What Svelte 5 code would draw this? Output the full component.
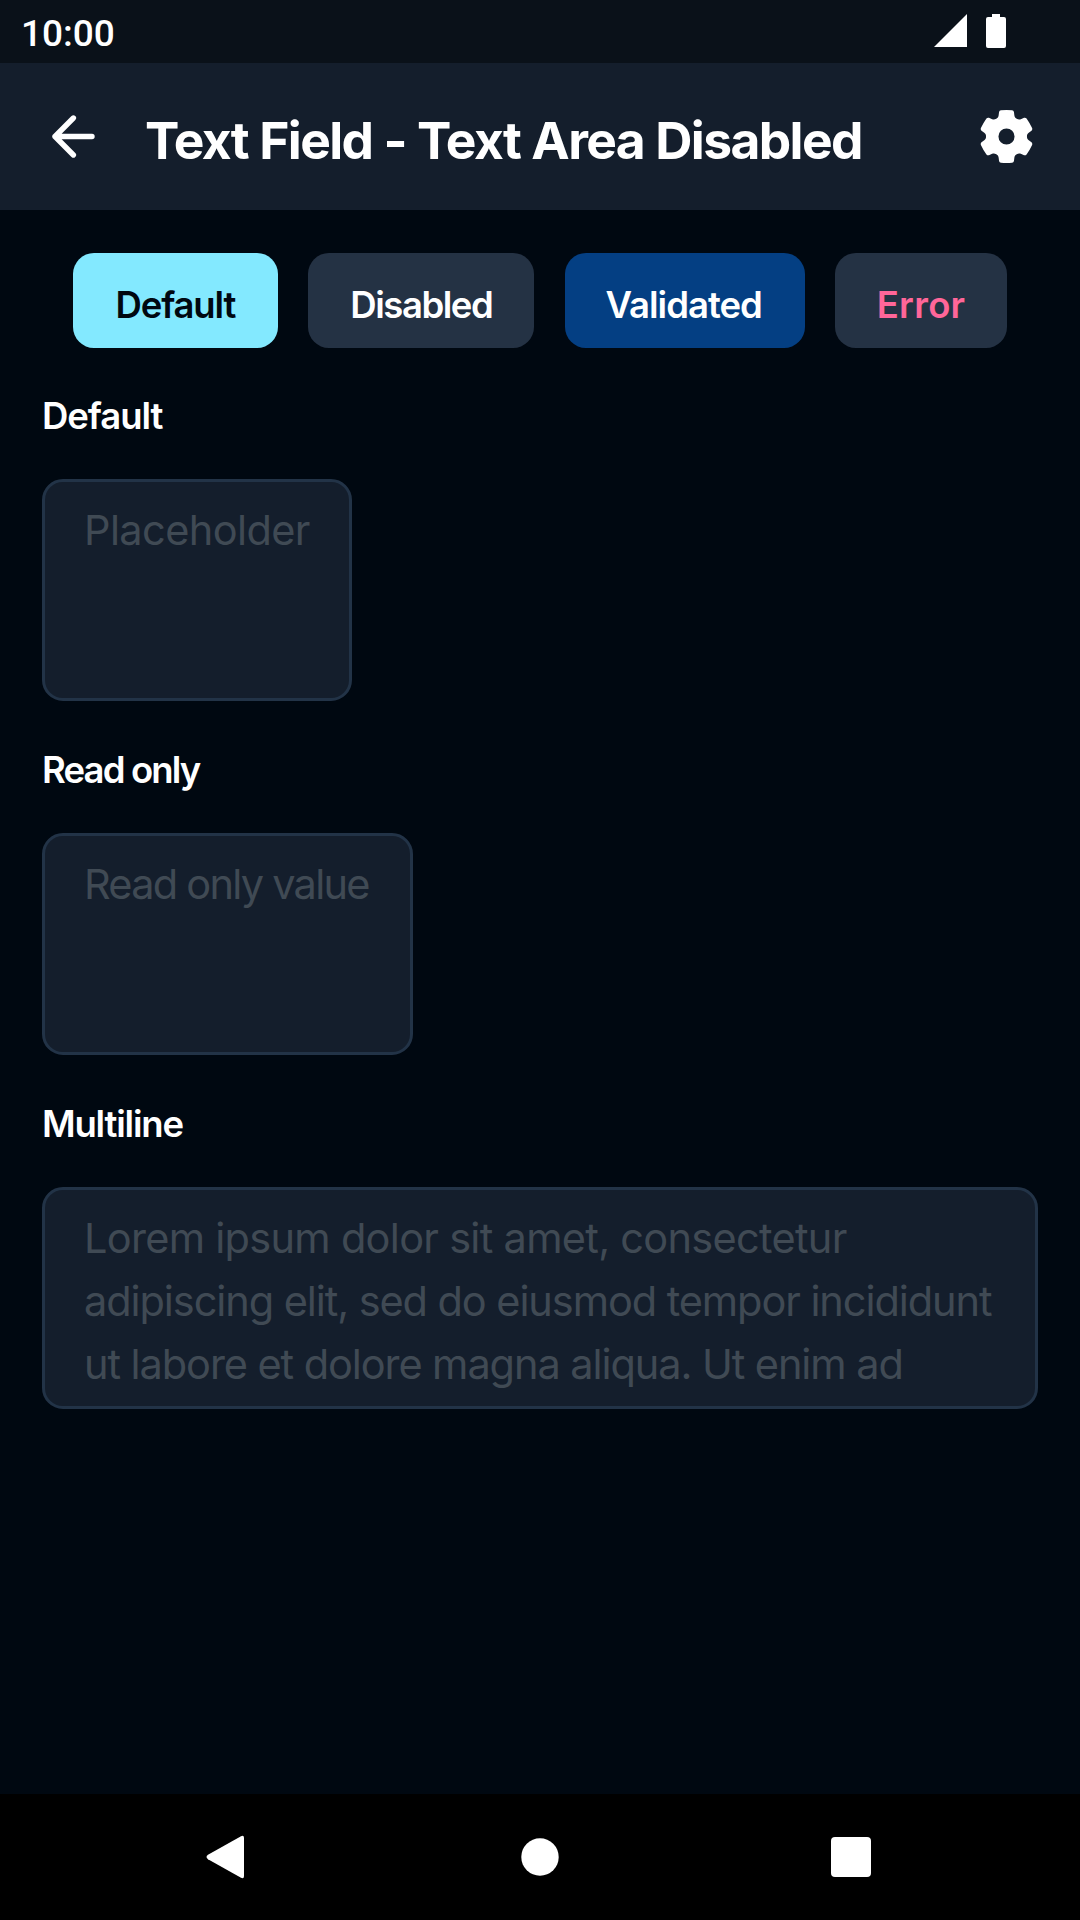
<script>
  const buttons = [
    { label: 'Default', kind: 'primary' },
    { label: 'Disabled', kind: 'secondary' },
    { label: 'Validated', kind: 'validated' },
    { label: 'Error', kind: 'error' },
  ];

  const fields = [
    { title: 'Default', kind: 'placeholder', lines: ['Placeholder'] },
    { title: 'Read only', kind: 'readonly', lines: ['Read only value'] },
    {
      title: 'Multiline',
      kind: 'multiline',
      lines: [
        'Lorem ipsum dolor sit amet, consectetur',
        'adipiscing elit, sed do eiusmod tempor incididunt',
        'ut labore et dolore magna aliqua. Ut enim ad',
      ],
    },
  ];

  // One gear tooth, centred on the origin and pointing up; repeated every 60 degrees.
  const tooth = [
    ['L', [-10.15, -17.6]],
    ['C', [-8.45, -18.6], [-8, -19.5], [-7.8, -21]],
    ['L', [-7.4, -24.4]],
    ['Q', [-7.1, -25.9], [-5.5, -26.2]],
    ['Q', [0, -26.7], [5.5, -26.2]],
    ['Q', [7.1, -25.9], [7.4, -24.4]],
    ['L', [7.8, -21]],
    ['C', [8, -19.5], [8.45, -18.6], [10.15, -17.6]],
  ];

  function turn([x, y], angle) {
    const c = Math.cos(angle);
    const s = Math.sin(angle);
    return `${(x * c - y * s).toFixed(2)} ${(x * s + y * c).toFixed(2)}`;
  }

  const outline = [0, 1, 2, 3, 4, 5]
    .flatMap((k) => tooth.map(([cmd, ...pts]) => cmd + pts.map((p) => turn(p, (k * Math.PI) / 3)).join(' ')))
    .join('');
  const gear = `M${outline.slice(1)}ZM8 0A8 8 0 1 0 -8 0A8 8 0 1 0 8 0Z`;
</script>

<div class="screen">
  <div class="status">
    <span class="time">10:00</span>
    <span class="indicators">
      <svg width="33" height="34" viewBox="0 0 33 34"><path d="M33 0V33H0Z" /></svg>
      <svg width="20" height="34" viewBox="0 0 20 34"><path d="M6 0H14V3H18Q20 3 20 5V32Q20 34 18 34H2Q0 34 0 32V5Q0 3 2 3H6Z" /></svg>
    </span>
  </div>

  <header>
    <svg class="back" width="63" height="63" viewBox="0 0 63 63"><path d="M50 31.5H13M31.4 13L13 31.5L31.4 50" /></svg>
    <h1>Text Field - Text Area Disabled</h1>
    <svg class="gear" width="63" height="63" viewBox="-31.3 -31.3 62.6 62.6"><path fill-rule="evenodd" d={gear} /></svg>
  </header>

  <main>
    <div class="buttons">
      {#each buttons as b}
        <button class={b.kind}><span>{b.label}</span></button>
      {/each}
    </div>

    {#each fields as f}
      <section class={f.kind}>
        <h2><span>{f.title}</span></h2>
        <div class="field">
          {#each f.lines as line}
            <p><span>{line}</span></p>
          {/each}
        </div>
      </section>
    {/each}
  </main>

  <nav>
    <svg width="54" height="54" viewBox="0 0 54 54"><path d="M41 6.2Q44 4.8 44 8V46Q44 49.2 41 47.8L8 29.2Q5 27 8 24.8Z" /></svg>
    <svg width="54" height="54" viewBox="0 0 54 54"><circle cx="28" cy="27" r="18.7" /></svg>
    <svg width="54" height="54" viewBox="0 0 54 54"><rect x="7" y="7" width="40" height="40" rx="4" /></svg>
  </nav>
</div>

<style>
  :global(body) {
    margin: 0;
    background: #000811;
  }
  .screen {
    width: 1080px;
    height: 1920px;
    display: flex;
    flex-direction: column;
    overflow: hidden;
    background: #000811;
    color: #fff;
    font-family: Inter, 'Liberation Sans', sans-serif;
    box-sizing: border-box;
  }
  svg {
    display: block;
    fill: #fff;
    flex: none;
  }
  .status {
    height: 63px;
    flex: none;
    display: flex;
    justify-content: space-between;
    background: #0a1119;
    padding: 0 74px 0 21px;
  }
  .time {
    font: 500 37px/67px Roboto, sans-serif;
  }
  .indicators {
    display: flex;
    gap: 19px;
    padding-top: 14px;
  }
  header {
    height: 147px;
    flex: none;
    display: flex;
    align-items: center;
    background: #141e2c;
    padding: 0 42px;
    box-sizing: border-box;
  }
  .back path {
    fill: none;
    stroke: #fff;
    stroke-width: 5.4;
    stroke-linecap: round;
    stroke-linejoin: round;
  }
  h1 {
    margin: 0;
    padding: 6px 0 0 40px;
    flex: 1;
    font-size: 51.5px;
    line-height: 64px;
    font-weight: 650;
    white-space: nowrap;
    letter-spacing: -1.6px;
    word-spacing: 0.5px;
  }
  main {
    flex: 1;
    padding: 43px 42px 0;
  }
  .buttons {
    display: flex;
    justify-content: center;
    gap: 30.4px;
  }
  button {
    height: 95px;
    padding: 8px 0 0;
    border: 0;
    border-radius: 21px;
    background: #243244;
    color: #fff;
    font: 600 36.5px/44px Inter, sans-serif;
    white-space: nowrap;
  }
  .primary {
    width: 205px;
    background: #83e9ff;
    color: #000811;
    letter-spacing: -1.15px;
  }
  .secondary {
    width: 226px;
    letter-spacing: -1.45px;
  }
  .validated {
    width: 240px;
    background: #043f83;
    letter-spacing: -1px;
    padding-right: 2px;
  }
  .error {
    width: 172px;
    color: #ff6699;
    letter-spacing: 0.25px;
  }
  section {
    height: 354px;
  }
  h2 {
    margin: 0;
    padding-top: 45px;
    height: 86px;
    font-size: 36.5px;
    line-height: 47px;
    font-weight: 600;
    letter-spacing: -1.05px;
  }
  .readonly h2 {
    letter-spacing: -1.85px;
  }
  .multiline h2 {
    letter-spacing: -1.2px;
  }
  .field {
    height: 222px;
    box-sizing: border-box;
    border: 3px solid #223347;
    border-radius: 21px;
    background: #141e2c;
    padding: 17px 39px 0;
    overflow: hidden;
    color: #404a54;
  }
  .placeholder .field {
    width: 310px;
    letter-spacing: -0.6px;
  }
  .readonly .field {
    width: 371px;
    letter-spacing: -1.75px;
  }
  p {
    margin: 0;
    font-size: 41.5px;
    line-height: 63px;
    white-space: nowrap;
  }
  .multiline p {
    letter-spacing: -1.08px;
  }
  .multiline p:first-child {
    letter-spacing: -0.71px;
  }
  nav {
    height: 126px;
    flex: none;
    display: flex;
    justify-content: space-between;
    align-items: center;
    background: #000;
    padding: 0 202px 0 200px;
  }
</style>
